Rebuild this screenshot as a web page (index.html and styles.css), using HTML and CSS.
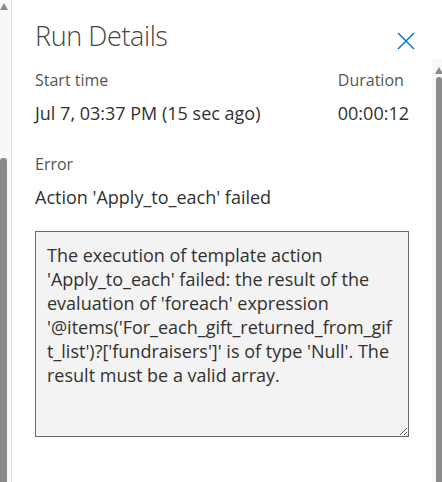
FILE: index.html
```html
<!DOCTYPE html>
<html lang="en">
<head>
    <meta charset="UTF-8">
    <meta name="viewport" content="width=device-width, initial-scale=1.0">
    <title>Run Details</title>
    <link rel="stylesheet" href="styles.css">
</head>
<body>
    <div class="page">
        <!-- Scrollbar of the page behind the panel -->
        <div class="rail rail-left">
            <span class="rail-arrow"></span>
            <span class="rail-thumb"></span>
        </div>

        <div class="panel">
            <div class="panel-header">
                <h1>Run Details</h1>
                <button class="close-btn" aria-label="Close">
                    <svg width="18" height="18" viewBox="0 0 18 18">
                        <path d="M1 1 L17 17 M17 1 L1 17" stroke="#0078d4" stroke-width="1.5" fill="none"/>
                    </svg>
                </button>
            </div>

            <div class="info-row">
                <div class="info-item">
                    <div class="label">Start time</div>
                    <div class="value">Jul 7, 03:37 PM (15 sec ago)</div>
                </div>
                <div class="info-item">
                    <div class="label">Duration</div>
                    <div class="value">00:00:12</div>
                </div>
            </div>

            <div class="info-item error-item">
                <div class="label">Error</div>
                <div class="value">Action 'Apply_to_each' failed</div>
            </div>

            <textarea class="error-box" readonly>The execution of template action 'Apply_to_each' failed: the result of the evaluation of 'foreach' expression '@items('For_each_gift_returned_from_gift_list')?['fundraisers']' is of type 'Null'. The result must be a valid array.</textarea>
        </div>

        <!-- Scrollbar of the panel -->
        <div class="rail rail-right">
            <span class="rail-arrow"></span>
            <span class="rail-thumb"></span>
        </div>
    </div>
</body>
</html>
```

FILE: styles.css
```css
body {
    margin: 0;
    padding: 0;
    background-color: white;
    font-family: "Open Sans", "Noto Sans", sans-serif;
    color: #323130;
    overflow: hidden;
}

.page {
    display: flex;
    height: 482px;
}

/* Scrollbars */
.rail {
    display: flex;
    flex-direction: column;
    background-color: #f8f8f8;
}

.rail-left {
    width: 11px;
    border-right: 1px solid #e3e3e3;
}

.rail-right {
    width: 10px;
    margin-top: 59px;
    align-items: flex-end;
}

.rail-arrow {
    width: 0;
    height: 0;
    border-left: 4px solid transparent;
    border-right: 4px solid transparent;
    border-bottom: 7px solid #8a8a8a;
}

.rail-left .rail-arrow {
    margin: 3px 0 0 0;
}

.rail-right .rail-arrow {
    margin: 8px -1px 0 0;
}

.rail-thumb {
    flex: 1;
    width: 7px;
    background-color: #8a8a8a;
    border-radius: 3px 3px 0 0;
}

.rail-left .rail-thumb {
    margin-top: 148px;
}

.rail-right .rail-thumb {
    margin-top: 3px;
    width: 6px;
}

/* Panel */
.panel {
    flex: 1;
    padding: 0 23px;
}

.panel-header {
    display: flex;
    justify-content: space-between;
    align-items: flex-start;
}

h1 {
    margin: 17px 0 0 0;
    font-size: 27px;
    font-weight: 300;
    letter-spacing: -0.4px;
    color: #444;
}

.close-btn {
    margin: 32px -6px 0 0;
    padding: 0;
    border: none;
    background: none;
    width: 18px;
    height: 18px;
}

.info-row {
    display: flex;
    justify-content: space-between;
}

.info-item {
    margin-top: 15px;
}

.error-item {
    margin-top: 28px;
}

.label {
    font-size: 16px;
    color: #555;
    line-height: 22px;
}

.value {
    margin-top: 10px;
    font-size: 18px;
    line-height: 24px;
}

.error-box {
    display: block;
    width: 100%;
    height: 206px;
    margin-top: 22px;
    padding: 11px 11px 8px;
    box-sizing: border-box;
    border: 1px solid #6b6b6b;
    background-color: #f3f3f3;
    font-family: inherit;
    font-size: 18px;
    line-height: 24px;
    color: #323130;
    resize: vertical;
    overflow: hidden;
}
```
